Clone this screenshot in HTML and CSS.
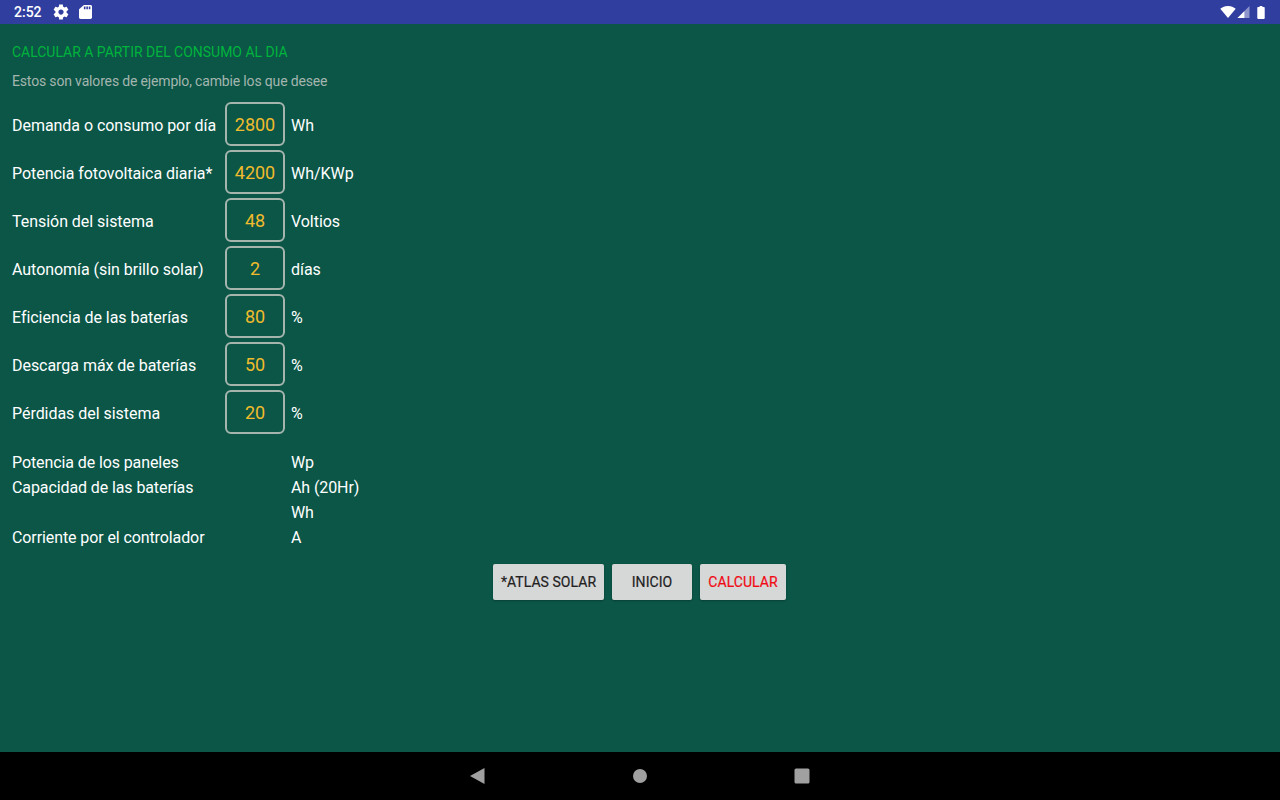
FILE: index.html
```html
<!DOCTYPE html>
<html lang="es">
<head>
<meta charset="utf-8">
<title>Calcular a partir del consumo al día</title>
<link rel="stylesheet" href="styles.css">
</head>
<body>
<div class="screen">
  <header class="status">
    <div class="status-left">
      <span class="time">2:52</span>
      <svg class="ic-gear" viewBox="0 0 24 24"><path d="M19.43 12.98c.04-.32.07-.64.07-.98s-.03-.66-.07-.98l2.11-1.65c.19-.15.24-.42.12-.64l-2-3.46c-.12-.22-.39-.3-.61-.22l-2.49 1c-.52-.4-1.08-.73-1.69-.98l-.38-2.65C14.46 2.18 14.25 2 14 2h-4c-.25 0-.46.18-.49.42l-.38 2.65c-.61.25-1.17.59-1.69.98l-2.49-1c-.23-.09-.49 0-.61.22l-2 3.46c-.13.22-.07.49.12.64l2.11 1.65c-.04.32-.07.65-.07.98s.03.66.07.98l-2.11 1.65c-.19.15-.24.42-.12.64l2 3.46c.12.22.39.3.61.22l2.49-1c.52.4 1.08.73 1.69.98l.38 2.65c.03.24.24.42.49.42h4c.25 0 .46-.18.49-.42l.38-2.65c.61-.25 1.17-.59 1.69-.98l2.49 1c.23.09.49 0 .61-.22l2-3.46c.12-.22.07-.49-.12-.64l-2.11-1.65zM12 15.5c-1.93 0-3.5-1.57-3.5-3.5s1.57-3.5 3.5-3.5 3.5 1.57 3.5 3.5-1.57 3.5-3.5 3.5z"/></svg>
      <svg class="ic-sd" viewBox="4 2 16 20" preserveAspectRatio="none"><path d="M18 2h-8L4.020 8 4 20c0 1.100.9 2 2 2h12c1.100 0 2-.9 2-2V4c0-1.100-.9-2-2-2zm-6 6h-2V4h2v4zm3 0h-2V4h2v4zm3 0h-2V4h2v4z"/></svg>
    </div>
    <div class="status-right">
      <svg class="ic-wifi" viewBox="0 0 18 14"><path d="M9 14 0 3.200C1.400 2 4.600 0 9 0s7.600 2 9 3.200z"/></svg>
      <svg class="ic-signal" viewBox="0 0 14 14"><path class="dim" d="M14 0v14H0z"/><path d="M8 6v8H0z"/></svg>
      <svg class="ic-batt" viewBox="0 0 8 14"><path d="M2.500 0h3v1.200H7c.5 0 1 .4 1 1V13c0 .6-.5 1-1 1H1c-.5 0-1-.4-1-1V2.200c0-.6.500-1 1-1h1.500z"/></svg>
    </div>
  </header>

  <main class="content">
    <h1 class="title">CALCULAR A PARTIR DEL CONSUMO AL DIA</h1>
    <p class="hint">Estos son valores de ejemplo, cambie los que desee</p>

    <div class="inputs">
      <div class="row"><span class="label">Demanda o consumo por día</span><span class="field">2800</span><span class="unit">Wh</span></div>
      <div class="row"><span class="label">Potencia fotovoltaica diaria*</span><span class="field">4200</span><span class="unit">Wh/KWp</span></div>
      <div class="row"><span class="label">Tensión del sistema</span><span class="field">48</span><span class="unit">Voltios</span></div>
      <div class="row"><span class="label">Autonomía (sin brillo solar)</span><span class="field">2</span><span class="unit">días</span></div>
      <div class="row"><span class="label">Eficiencia de las baterías</span><span class="field">80</span><span class="unit">%</span></div>
      <div class="row"><span class="label">Descarga máx de baterías</span><span class="field">50</span><span class="unit">%</span></div>
      <div class="row"><span class="label">Pérdidas del sistema</span><span class="field">20</span><span class="unit">%</span></div>
    </div>

    <div class="results">
      <div class="res"><span class="res-label">Potencia de los paneles</span><span>Wp</span></div>
      <div class="res"><span class="res-label">Capacidad de las baterías</span><span>Ah (20Hr)</span></div>
      <div class="res"><span class="res-label"></span><span>Wh</span></div>
      <div class="res"><span class="res-label">Corriente por el controlador</span><span>A</span></div>
    </div>

    <div class="actions">
      <button class="btn btn-atlas">*ATLAS SOLAR</button>
      <button class="btn btn-inicio">INICIO</button>
      <button class="btn btn-calc">CALCULAR</button>
    </div>
  </main>

  <footer class="nav">
    <svg class="nav-ic" viewBox="0 0 16 16"><path d="M14.500 0v16L0 8z"/></svg>
    <svg class="nav-ic" viewBox="0 0 16 16"><circle cx="8" cy="8" r="7"/></svg>
    <svg class="nav-ic" viewBox="0 0 16 16"><rect x=".5" y=".5" width="15" height="15" rx="1.500"/></svg>
  </footer>
</div>
</body>
</html>
```

FILE: styles.css
```css
* { box-sizing: border-box; }
html, body { margin: 0; height: 100%; }
body { font-family: Roboto, "Liberation Sans", sans-serif; background: #0b5647; overflow: hidden; }

.screen { width: 1280px; height: 800px; display: flex; flex-direction: column; }

.status { height: 24px; flex: none; background: #303f9f; display: flex; justify-content: space-between; align-items: center; padding: 0 14px; color: #fff; }
.status-left { display: flex; align-items: center; }
.status-right { display: flex; align-items: center; }
.time { font-size: 14px; font-weight: 500; width: 39px; }
.status svg { fill: #fff; display: block; }
.ic-gear { width: 18px; height: 18px; margin-left: -1px; }
.ic-sd { width: 13px; height: 14px; margin-left: 9px; }
.ic-wifi { width: 16px; height: 12px; }
.ic-signal { width: 13px; height: 12px; margin-left: 1px; }
.ic-signal .dim { opacity: .45; }
.ic-batt { width: 8px; height: 13px; margin-left: 7px; margin-right: 1px; }

.content { flex: 1; padding: 20px 12px 0; }
.title { margin: 0; font-size: 14px; font-weight: 400; line-height: 16px; letter-spacing: -.02px; color: #00b33c; }
.hint { margin: 13px 0 0; font-size: 14px; line-height: 16px; letter-spacing: -.16px; color: #a3b5ae; }

.inputs { margin-top: 13px; }
.row { display: flex; align-items: center; height: 44px; margin-bottom: 4px; font-size: 16px; letter-spacing: -.04px; color: #fff; }
.label { width: 213px; padding-top: 2px; }
.field { width: 60px; height: 44px; border: 2px solid #a5b5ad; border-radius: 6px; color: #f0bb2c; font-size: 18px; letter-spacing: 0; display: flex; align-items: center; justify-content: center; }
.unit { margin-left: 6px; padding-top: 2px; }

.results { margin-top: 15px; }
.res { display: flex; height: 25px; align-items: center; font-size: 16px; letter-spacing: -.1px; color: #fff; padding-top: 1px; }
.res-label { width: 279px; }

.actions { display: flex; justify-content: center; gap: 8px; margin-top: 15px; padding-right: 1px; }
.btn { height: 36px; border: 0; border-radius: 2px; background: #d6d7d7; color: #222; font: 400 14px Roboto, sans-serif; letter-spacing: .05px; padding: 0; box-shadow: 0 1px 2px rgba(0,0,0,.25); -webkit-text-stroke: .2px currentColor; }
.btn-atlas { width: 111px; }
.btn-inicio { width: 80px; }
.btn-calc { width: 86px; color: #f00a14; }

.nav { height: 48px; flex: none; background: #000; display: flex; justify-content: center; align-items: center; gap: 146px; }
.nav-ic { width: 16px; height: 16px; fill: #a0a0a0; display: block; }
```
